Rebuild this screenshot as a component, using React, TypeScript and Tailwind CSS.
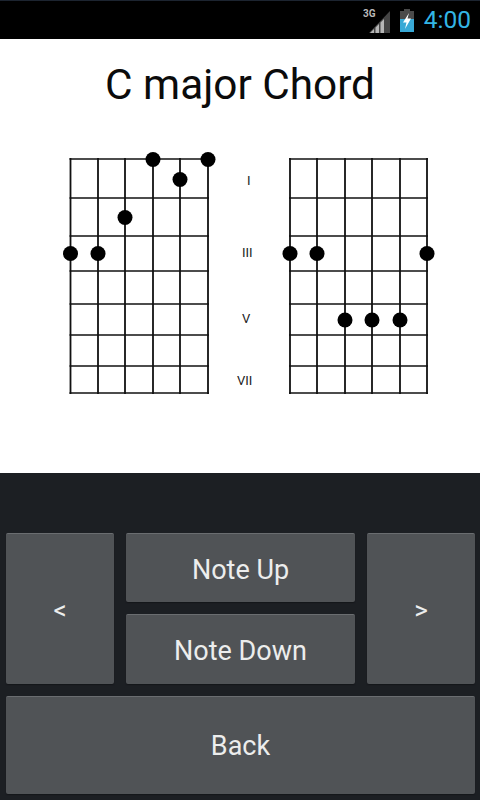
const frets = [159, 198, 236, 271, 304, 335, 366, 393];

// string and dot positions are in the board's own coordinates
const leftStrings = [9.5, 37, 64, 92, 119, 147];
const rightStrings = [10, 37, 65, 92, 120, 147];
const leftDots = [[92, 159.5], [147, 159.5], [119, 179.5], [64, 217.5], [9.5, 253.5], [37, 253.5]];
const rightDots = [[10, 253.5], [37, 253.5], [147, 253.5], [65, 320], [92, 320], [120, 320]];

function Board({ strings, dots }: { strings: number[]; dots: number[][] }) {
  return (
    <svg width="160" height="250" viewBox="0 150 160 250" className="block shrink-0">
      {strings.map((x) => (
        <line key={x} x1={x} y1="158" x2={x} y2="394" stroke="#111" strokeWidth="1.8" />
      ))}
      {frets.map((y) => (
        <line key={y} x1={strings[0] - 1} y1={y} x2={strings[5] + 1} y2={y} stroke="#111" strokeWidth="1.7" />
      ))}
      {dots.map(([x, y]) => (
        <circle key={`${x}-${y}`} cx={x} cy={y} r="7.5" fill="#000" />
      ))}
    </svg>
  );
}

function Btn({ label, className, text }: { label: string; className: string; text: string }) {
  return (
    <button className={`flex items-center justify-center rounded-[2px] border-t border-t-[#6a6d70] bg-[#505356] text-[#eceded] shadow-[0_1px_1px_#15171a] ${text} ${className}`}>
      {label}
    </button>
  );
}

export default function App() {
  return (
    <div className="flex h-[800px] w-[480px] flex-col overflow-hidden bg-white font-['Roboto',sans-serif]">
      {/* Status bar */}
      <div className="flex h-[39px] shrink-0 items-center justify-end gap-[9px] border-t border-t-[#1c2430] bg-black pr-[9px]">
        <svg width="28" height="28" viewBox="0 0 28 28" className="-ml-[8px]">
          <path d="M27 5V27H6Z" fill="#444" />
          <path d="M7 27L11 23V27ZM12.5 27V21.5L16 18V27ZM17.5 27V16.5L21 13V27Z" fill="#b5b5b5" />
          <text x="0" y="11" fontSize="10" fontWeight="700" fill="#b9b9b9" fontFamily="Roboto, sans-serif">3G</text>
        </svg>
        <svg width="16" height="25" viewBox="0 0 16 25" className="-ml-[1px]">
          <path d="M5 1H11V3H15V24H1V3H5Z" fill="#4a4a4a" />
          <path d="M1 11H15V24H1Z" fill="#39a9d6" />
          <path d="M10 5L4 14.5H7.5L6 21L12 10.5H8.5Z" fill="#fff" />
        </svg>
        <span className="text-[24.5px] leading-none text-[#33b5e5]">4:00</span>
      </div>

      {/* Chord area */}
      <div className="flex h-[434px] shrink-0 flex-col items-center bg-white">
        <h1 className="mt-[19px] h-[92px] text-[42.3px] leading-[54px] font-normal text-[#0b0b0b]">C major Chord</h1>
        <div className="flex w-full pl-[61px]">
          <Board strings={leftStrings} dots={leftDots} />
          <div className="relative h-[250px] w-[59px] shrink-0 text-[13px] leading-[16px] text-[#222]">
            <span className="absolute top-[23px] left-[26px]">I</span>
            <span className="absolute top-[95px] left-[21px]">III</span>
            <span className="absolute top-[161px] left-[21px]">V</span>
            <span className="absolute top-[223px] left-[16px]">VII</span>
          </div>
          <Board strings={rightStrings} dots={rightDots} />
        </div>
      </div>

      {/* Controls */}
      <div className="flex flex-1 flex-col gap-[12px] bg-[#1c1f23] px-[5px] pt-[60px]">
        <div className="flex h-[151px] gap-[12px]">
          <Btn label="<" text="text-[26px] pt-[2px]" className="ml-[1px] w-[108px]" />
          <div className="flex w-[229px] flex-col gap-[12px]">
            <Btn label="Note Up" text="text-[27px] pt-[4px]" className="h-[69px]" />
            <Btn label="Note Down" text="text-[27px] pt-[3px]" className="h-[70px]" />
          </div>
          <Btn label=">" text="text-[26px] pt-[2px]" className="w-[108px]" />
        </div>
        <Btn label="Back" text="text-[27px] pt-[2px]" className="ml-[1px] h-[98px] w-[469px]" />
      </div>
    </div>
  );
}
